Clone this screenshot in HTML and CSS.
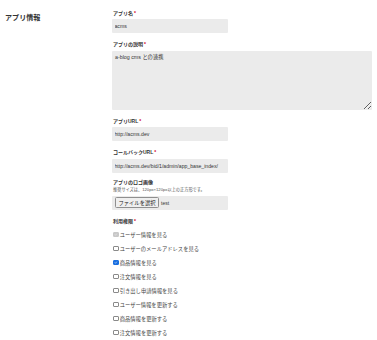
FILE: index.html
```html
<!DOCTYPE html>
<html lang="ja">
<head>
<meta charset="utf-8">
<link rel="stylesheet" href="styles.css">
</head>
<body>
<div class="section">
  <h2 class="heading">アプリ情報</h2>
  <div class="form">
    <div class="field">
      <div class="label">アプリ名<span class="req">*</span></div>
      <input class="input" type="text" value="acms">
    </div>
    <div class="field">
      <div class="label">アプリの説明<span class="req">*</span></div>
      <textarea class="textarea">a-blog cms との連携</textarea>
    </div>
    <div class="field">
      <div class="label">アプリURL<span class="req">*</span></div>
      <input class="input" type="text" value="http://acms.dev">
    </div>
    <div class="field">
      <div class="label">コールバックURL<span class="req">*</span></div>
      <input class="input" type="text" value="http://acms.dev/bid/1/admin/app_base_index/">
    </div>
    <div class="field field-logo">
      <div class="label">アプリのロゴ画像</div>
      <div class="help">推奨サイズは、120px×120px以上の正方形です。</div>
      <div class="filebox"><span class="filebtn">ファイルを選択</span><span class="filename">test</span></div>
    </div>
    <div class="field">
      <div class="label">利用権限<span class="req">*</span></div>
      <ul class="checks">
        <li class="check"><span class="box disabled"><svg viewBox="0 0 10 10"><path d="M2.2 5.2 L4.2 7.2 L7.8 2.8" /></svg></span>ユーザー情報を見る</li>
        <li class="check"><span class="box"></span>ユーザーのメールアドレスを見る</li>
        <li class="check"><span class="box checked"><svg viewBox="0 0 10 10"><path d="M2.2 5.2 L4.2 7.2 L7.8 2.8" /></svg></span>商品情報を見る</li>
        <li class="check"><span class="box"></span>注文情報を見る</li>
        <li class="check"><span class="box"></span>引き出し申請情報を見る</li>
        <li class="check"><span class="box"></span>ユーザー情報を更新する</li>
        <li class="check"><span class="box"></span>商品情報を更新する</li>
        <li class="check"><span class="box"></span>注文情報を更新する</li>
      </ul>
    </div>
  </div>
</div>
</body>
</html>
```

FILE: styles.css
```css
html, body {
  margin: 0;
  padding: 0;
  background: #ffffff;
}
body {
  font-family: "Liberation Sans", "Noto Sans CJK JP", sans-serif;
  color: #333333;
}
.section {
  display: grid;
  grid-template-columns: 112px 1fr;
}
.heading {
  margin: 13.5px 0 0 5px;
  height: 8px;
  font-size: 7.1px;
  line-height: 8px;
  font-weight: bold;
  color: #333;
}
.form {
  padding-top: 9.5px;
  padding-right: 6px;
}
.field {
  margin-bottom: 8px;
}
.field-logo {
  margin-top: -1.5px;
}
.label {
  height: 6px;
  font-size: 5px;
  line-height: 6px;
  font-weight: bold;
  color: #333;
  margin-bottom: 3.5px;
  padding-left: 1px;
  white-space: nowrap;
}
.req {
  color: #d0021b;
  margin-left: 1px;
}
.input {
  display: block;
  box-sizing: border-box;
  width: 116px;
  height: 14px;
  margin: 0;
  border: none;
  border-radius: 1px;
  background: #ebebeb;
  padding: 0 2.5px;
  font-family: "Liberation Sans", "Noto Sans CJK JP", sans-serif;
  font-size: 5.15px;
  color: #333;
  outline: none;
}
.textarea {
  display: block;
  box-sizing: border-box;
  width: 260px;
  height: 59px;
  margin: 0;
  border: none;
  border-radius: 1px;
  background: #ebebeb;
  padding: 3px 3px;
  font-family: "Liberation Sans", "Noto Sans CJK JP", sans-serif;
  font-size: 5.3px;
  line-height: 7px;
  color: #333;
  outline: none;
}
.help {
  height: 6px;
  font-size: 4.2px;
  line-height: 6px;
  color: #555;
  margin-top: -1.5px;
  margin-bottom: 2.5px;
  padding-left: 1px;
  white-space: nowrap;
}
.filebox {
  box-sizing: border-box;
  width: 116px;
  height: 14.5px;
  background: #ebebeb;
  border-radius: 1px;
  display: flex;
  align-items: center;
  padding-left: 3px;
}
.filebtn {
  box-sizing: border-box;
  height: 11px;
  width: 44px;
  display: flex;
  align-items: center;
  justify-content: center;
  border: 0.7px solid #8f8f8f;
  border-radius: 1.5px;
  background: #efefef;
  font-size: 5.3px;
  line-height: 6px;
  color: #222;
}
.filename {
  font-size: 5px;
  line-height: 6px;
  margin-left: 2px;
  color: #333;
}
.checks {
  list-style: none;
  margin: 2.5px 0 0 0;
  padding: 0;
}
.check {
  height: 14px;
  display: flex;
  align-items: center;
  font-size: 5.3px;
  line-height: 6px;
  color: #444;
  padding-left: 1px;
  white-space: nowrap;
}
.box {
  box-sizing: border-box;
  flex: none;
  width: 5.5px;
  height: 5.5px;
  border: 0.6px solid #8a8a8a;
  border-radius: 1px;
  background: #fff;
  margin-right: 1.2px;
  display: flex;
  align-items: center;
  justify-content: center;
}
.box svg {
  width: 5px;
  height: 5px;
  fill: none;
  stroke: #fff;
  stroke-width: 1.6;
}
.box.checked {
  background: #1a6fe0;
  border-color: #1a6fe0;
}
.box.disabled {
  background: #c8c8c8;
  border-color: #c8c8c8;
}
.box.disabled svg {
  stroke: #f2f2f2;
}
```
